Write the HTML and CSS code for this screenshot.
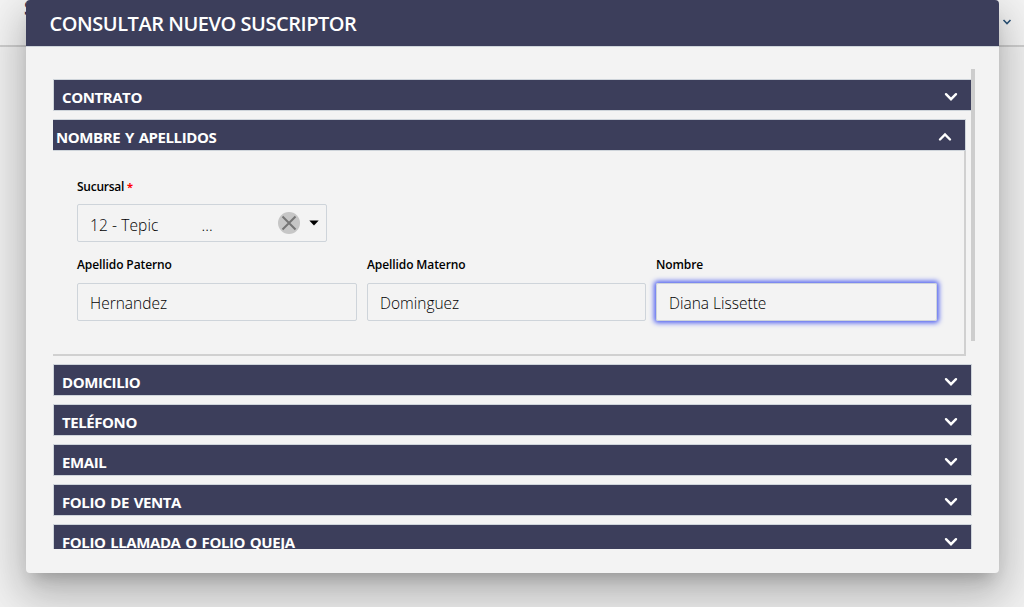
FILE: index.html
```html
<!DOCTYPE html>
<html lang="es">
<head>
<meta charset="utf-8">
<title>Consultar nuevo suscriptor</title>
<link rel="stylesheet" href="styles.css">
</head>
<body>
<div class="page">
  <header class="topbar">
    <span class="brand">S</span>
    <svg class="topbar-chevron" viewBox="0 0 10 6"><path d="M1.500 1L5 4.500 8.500 1"/></svg>
  </header>
</div>
<main class="modal">
  <header class="modal-header"><h1>CONSULTAR NUEVO SUSCRIPTOR</h1></header>
  <div class="scroll-area">
    <section class="bar"><h2>CONTRATO</h2><svg class="chevron" viewBox="0 0 14 10"><path d="M2 2.2l5 5 5-5"/></svg></section>
    <section class="open-panel">
      <div class="bar bar-open"><h2>NOMBRE Y APELLIDOS</h2><svg class="chevron" viewBox="0 0 14 10"><path d="M2 7.5l5-5 5 5"/></svg></div>
      <form class="fields">
        <div class="field field-select">
          <label>Sucursal <b class="required">*</b></label>
          <div class="input select">
            <span>12 - Tepic</span><span class="dots">...</span>
            <svg class="clear" viewBox="0 0 22 22"><circle cx="11" cy="11" r="11"/><path d="M4.5 4.5l13 13M17.5 4.5l-13 13"/></svg>
            <svg class="caret" viewBox="0 0 10 6"><path d="M.3.5h9.4L5 5.4z"/></svg>
          </div>
        </div>
        <div class="field-row">
          <div class="field"><label>Apellido Paterno</label><div class="input">Hernandez</div></div>
          <div class="field"><label>Apellido Materno</label><div class="input">Dominguez</div></div>
          <div class="field"><label>Nombre</label><div class="input focused">Diana Lissette</div></div>
        </div>
      </form>
    </section>
    <section class="bar"><h2>DOMICILIO</h2><svg class="chevron" viewBox="0 0 14 10"><path d="M2 2.2l5 5 5-5"/></svg></section>
    <section class="bar"><h2>TELÉFONO</h2><svg class="chevron" viewBox="0 0 14 10"><path d="M2 2.2l5 5 5-5"/></svg></section>
    <section class="bar"><h2>EMAIL</h2><svg class="chevron" viewBox="0 0 14 10"><path d="M2 2.2l5 5 5-5"/></svg></section>
    <section class="bar"><h2>FOLIO DE VENTA</h2><svg class="chevron" viewBox="0 0 14 10"><path d="M2 2.2l5 5 5-5"/></svg></section>
    <section class="bar"><h2>FOLIO LLAMADA O FOLIO QUEJA</h2><svg class="chevron" viewBox="0 0 14 10"><path d="M2 2.2l5 5 5-5"/></svg></section>
    <div class="scroll-thumb"></div>
  </div>
</main>
</body>
</html>
```
FILE: styles.css
```css
* { box-sizing: border-box; }
body {
  margin: 0;
  height: 607px;
  overflow: hidden;
  background: #f0f0f0;
  font-family: "Open Sans", "Noto Sans", sans-serif;
}
.page { height: 607px; }
.topbar {
  height: 47px;
  display: flex;
  justify-content: space-between;
  padding: 0 12px 0 24px;
  background: #f4f4f4;
  border-bottom: 2px solid #cecece;
}
.brand { font-size: 20px; line-height: 16px; font-weight: 700; color: #1f2b52; }
.topbar-chevron { width: 10px; height: 6px; margin-top: 19px; fill: none; stroke: #2c5478; stroke-width: 1.6; }

/* dialog */
.modal {
  position: absolute;
  left: 26px;
  top: 0;
  width: 973px;
  height: 573px;
  background: #f3f3f3;
  border-radius: 4px;
  box-shadow: 0 11px 15px -7px rgba(0,0,0,.2), 0 24px 38px 3px rgba(0,0,0,.14), 0 9px 46px 8px rgba(0,0,0,.12);
}
.modal-header {
  height: 47px;
  padding: 0 24px;
  background: #3c3e5b;
  border-bottom: 1px solid #ced4da;
  border-radius: 4px 4px 0 0;
}
h1 { margin: 0 0 0 -.5px; font-size: 20px; line-height: 48px; font-weight: 600; color: #fff; letter-spacing: -.46px; white-space: nowrap; }
.scroll-area {
  position: relative;
  margin: 22px 0 0 27px;
  width: 922px;
  height: 480px;
  padding-top: 10px;
  overflow: hidden;
}
.scroll-thumb { position: absolute; right: 0; top: 0; width: 4px; height: 272px; background: #cdcdcd; }

/* accordion */
.bar {
  width: 919px;
  height: 32px;
  margin-bottom: 8px;
  padding: 0 13px 0 8px;
  display: flex;
  align-items: center;
  justify-content: space-between;
  background: #3c3e5b;
  border: 1px solid #ced4da;
}
h2 { margin: 0; padding-top: 4px; font-size: 15px; line-height: 25px; font-weight: 700; color: #fff; letter-spacing: -.42px; word-spacing: 1.3px; white-space: nowrap; }
.chevron { width: 14px; height: 10px; margin-top: 3px; fill: none; stroke: #fff; stroke-width: 2.4; stroke-linecap: round; }
.open-panel {
  width: 913px;
  height: 237px;
  margin-bottom: 8px;
  border-right: 2px solid #d0d0d0;
  border-bottom: 2px solid #d0d0d0;
}
.bar-open { width: 913px; margin: 0; padding-left: 3px; border-left: 0; }

/* form */
.fields { padding: 26px 26px 0 24px; }
label { display: block; height: 27px; font-size: 12px; line-height: 19px; font-weight: 600; color: #000; letter-spacing: -.1px; }
.required { color: #f00; font-size: 11px; font-weight: 700; line-height: 1; }
.field-select { width: 250px; margin-bottom: 14px; }
.field-select label { letter-spacing: -.25px; }
.field-row { display: grid; grid-template-columns: 280px 279px 281px; column-gap: 10px; }
.field-row label { line-height: 18px; }
.input {
  height: 38px;
  padding: 2px 12px 0;
  display: flex;
  align-items: center;
  border: 1px solid #ced4da;
  border-radius: 2px;
  font-size: 15.5px;
  font-weight: 300;
  color: #000;
  white-space: nowrap;
}
.focused { box-shadow: 0 0 5px 2px #5060f0; }
.select { padding-top: 4px; padding-right: 7px; letter-spacing: .1px; }
.select .dots { margin-left: 43px; }
.clear { width: 22px; height: 22px; margin: -5px 9px 0 auto; fill: #c6c6c6; }
.clear path { stroke: #757575; stroke-width: 2; }
.caret { width: 10px; height: 6px; margin-top: -4px; fill: #000; }
```
